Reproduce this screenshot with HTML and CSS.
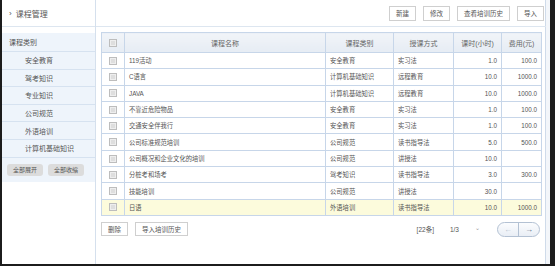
FILE: index.html
```html
<!DOCTYPE html>
<html lang="zh-CN">
<head>
    <meta charset="UTF-8">
    <title>课程管理</title>
    <link rel="stylesheet" href="styles.css">
</head>
<body>
    <div class="frame">
        <div class="app">
            <aside class="side">
                <div class="side-head"><span class="caret">›</span>课程管理</div>
                <div class="tree">
                    <div class="tree-root">课程类别</div>
                    <div class="tree-item">安全教育</div>
                    <div class="tree-item">驾考知识</div>
                    <div class="tree-item">专业知识</div>
                    <div class="tree-item">公司规范</div>
                    <div class="tree-item">外语培训</div>
                    <div class="tree-item">计算机基础知识</div>
                    <div class="tree-btns">
                        <button class="gray-btn">全部展开</button>
                        <button class="gray-btn">全部收缩</button>
                    </div>
                </div>
            </aside>
            <main class="main">
                <div class="toolbar">
                    <button class="btn">新建</button>
                    <button class="btn">修改</button>
                    <button class="btn">查看培训历史</button>
                    <button class="btn">导入</button>
                </div>
                <div class="content">
                    <table class="grid">
                        <colgroup>
                            <col style="width:23px">
                            <col style="width:201px">
                            <col style="width:68px">
                            <col style="width:60px">
                            <col style="width:48px">
                            <col style="width:40px">
                        </colgroup>
                        <thead>
                            <tr>
                                <th><span class="cb"></span></th>
                                <th>课程名称</th>
                                <th>课程类别</th>
                                <th>授课方式</th>
                                <th>课时(小时)</th>
                                <th>费用(元)</th>
                            </tr>
                        </thead>
                        <tbody>
                            <tr><td class="c"><span class="cb"></span></td><td>119活动</td><td>安全教育</td><td>实习法</td><td class="num">1.0</td><td class="num">100.0</td></tr>
                            <tr><td class="c"><span class="cb"></span></td><td>C语言</td><td>计算机基础知识</td><td>远程教育</td><td class="num">10.0</td><td class="num">1000.0</td></tr>
                            <tr><td class="c"><span class="cb"></span></td><td>JAVA</td><td>计算机基础知识</td><td>远程教育</td><td class="num">10.0</td><td class="num">1000.0</td></tr>
                            <tr><td class="c"><span class="cb"></span></td><td>不靠近危险物品</td><td>安全教育</td><td>实习法</td><td class="num">1.0</td><td class="num">100.0</td></tr>
                            <tr><td class="c"><span class="cb"></span></td><td>交通安全伴我行</td><td>安全教育</td><td>实习法</td><td class="num">1.0</td><td class="num">100.0</td></tr>
                            <tr><td class="c"><span class="cb"></span></td><td>公司标准规范培训</td><td>公司规范</td><td>读书指导法</td><td class="num">5.0</td><td class="num">500.0</td></tr>
                            <tr><td class="c"><span class="cb"></span></td><td>公司概况和企业文化的培训</td><td>公司规范</td><td>讲授法</td><td class="num">10.0</td><td class="num"></td></tr>
                            <tr><td class="c"><span class="cb"></span></td><td>分桩考和场考</td><td>驾考知识</td><td>读书指导法</td><td class="num">3.0</td><td class="num">300.0</td></tr>
                            <tr><td class="c"><span class="cb"></span></td><td>技能培训</td><td>公司规范</td><td>讲授法</td><td class="num">30.0</td><td class="num"></td></tr>
                            <tr class="sel"><td class="c"><span class="cb"></span></td><td>日语</td><td>外语培训</td><td>读书指导法</td><td class="num">10.0</td><td class="num">1000.0</td></tr>
                        </tbody>
                    </table>
                    <div class="footbar">
                        <button class="btn">删除</button>
                        <button class="btn">导入培训历史</button>
                        <div class="pager">
                            <span class="count">[22条]</span>
                            <span class="page">1/3</span>
                            <span class="drop">⌄</span>
                            <span class="arrows">
                                <span class="arr prev">←</span>
                                <span class="arr next">→</span>
                            </span>
                        </div>
                    </div>
                </div>
            </main>
        </div>
    </div>
</body>
</html>
```

FILE: styles.css
```css
body {
    margin: 0;
    font-family: "Liberation Sans", "Noto Sans CJK SC", sans-serif;
    color: #555;
    background: #fff;
}
.frame {
    width: 555px;
    height: 266px;
    box-sizing: border-box;
    border-left: 2px solid #1c1c1c;
    border-right: 5px solid #1c1c1c;
    border-bottom: 2px solid #1c1c1c;
    background: #f3f6fa;
}
.app {
    display: flex;
    width: 543px;
    height: 100%;
    background: #fff;
    border-right: 1px solid #cfdbea;
}
/* 왼쪽 트리 */
.side {
    width: 93px;
    flex: none;
    border-right: 1px solid #d5e0ed;
}
.side-head {
    height: 27px;
    box-sizing: border-box;
    border-bottom: 1px solid #dde6f0;
    padding-left: 7px;
    display: flex;
    align-items: center;
    font-size: 8px;
    color: #555;
}
.caret {
    font-size: 8px;
    margin-right: 4px;
}
.tree {
    margin-top: 6px;
    background: #eef4fb;
    padding-bottom: 6px;
}
.tree-root, .tree-item {
    box-sizing: border-box;
    border-bottom: 1px solid #d6e2f0;
    display: flex;
    align-items: center;
    font-size: 7px;
}
.tree-root {
    height: 19px;
    padding-left: 7px;
}
.tree-item {
    height: 17.6px;
    padding-left: 23px;
}
.tree-btns {
    display: flex;
    gap: 5px;
    padding: 6px 0 0 5px;
}
.gray-btn {
    width: 36px;
    height: 12px;
    padding: 0;
    border: none;
    border-radius: 3px;
    background: #dcdcdc;
    color: #555;
    font-family: inherit;
    font-size: 6px;
}
/* 오른쪽 */
.main {
    flex: 1;
    display: flex;
    flex-direction: column;
}
.toolbar {
    height: 27px;
    box-sizing: border-box;
    border-bottom: 1px solid #dde6f0;
    display: flex;
    justify-content: flex-end;
    align-items: center;
    gap: 7px;
    padding-right: 2px;
}
.btn {
    height: 15px;
    padding: 0 6px;
    border: 1px solid #cfcfcf;
    background: #fff;
    color: #555;
    font-family: inherit;
    font-size: 6.5px;
    border-radius: 0;
}
.content {
    padding: 5px 4px 0 5px;
}
.grid {
    width: 440px;
    table-layout: fixed;
    border-collapse: collapse;
    border: 1px solid #c7d6e9;
    font-size: 6.3px;
}
.grid th {
    height: 19px;
    padding: 0;
    background: linear-gradient(#f1f4f8, #e6ecf4);
    border: 1px solid #c7d6e9;
    font-weight: normal;
    font-size: 7px;
    color: #666;
    text-align: center;
}
.grid td {
    height: 15.3px;
    padding: 0 4px;
    border: 1px solid #c7d6e9;
    white-space: nowrap;
    overflow: hidden;
}
.grid td.c {
    text-align: center;
    padding: 0;
}
.grid td.num {
    text-align: right;
}
.grid tr.sel td {
    background: #fcfbdc;
}
.cb {
    display: inline-block;
    width: 6px;
    height: 6px;
    border: 1px solid #bdbdbd;
    background: #dedede;
    box-shadow: inset 0 0 0 1px #eeeeee;
    vertical-align: middle;
}
.footbar {
    display: flex;
    align-items: center;
    gap: 7px;
    margin-top: 6px;
}
.footbar .btn {
    height: 14px;
}
.pager {
    margin-left: auto;
    display: flex;
    align-items: center;
    font-size: 6.5px;
    margin-right: 2px;
}
.count {
    margin-right: 16px;
}
.page {
    margin-right: 16px;
}
.drop {
    font-size: 6px;
    color: #999;
    margin-right: 17px;
    margin-top: -3px;
}
.arrows {
    display: flex;
    width: 43px;
    height: 15px;
    box-sizing: border-box;
    border: 1px solid #b3c1d3;
    border-radius: 8px;
    background: linear-gradient(#fbfcfe, #e9eef5);
    overflow: hidden;
}
.arr {
    flex: 1;
    display: flex;
    align-items: center;
    justify-content: center;
    font-size: 8px;
}
.prev {
    color: #b8c2cf;
    border-right: 1px solid #b3c1d3;
}
.next {
    color: #5a6e88;
}
```
